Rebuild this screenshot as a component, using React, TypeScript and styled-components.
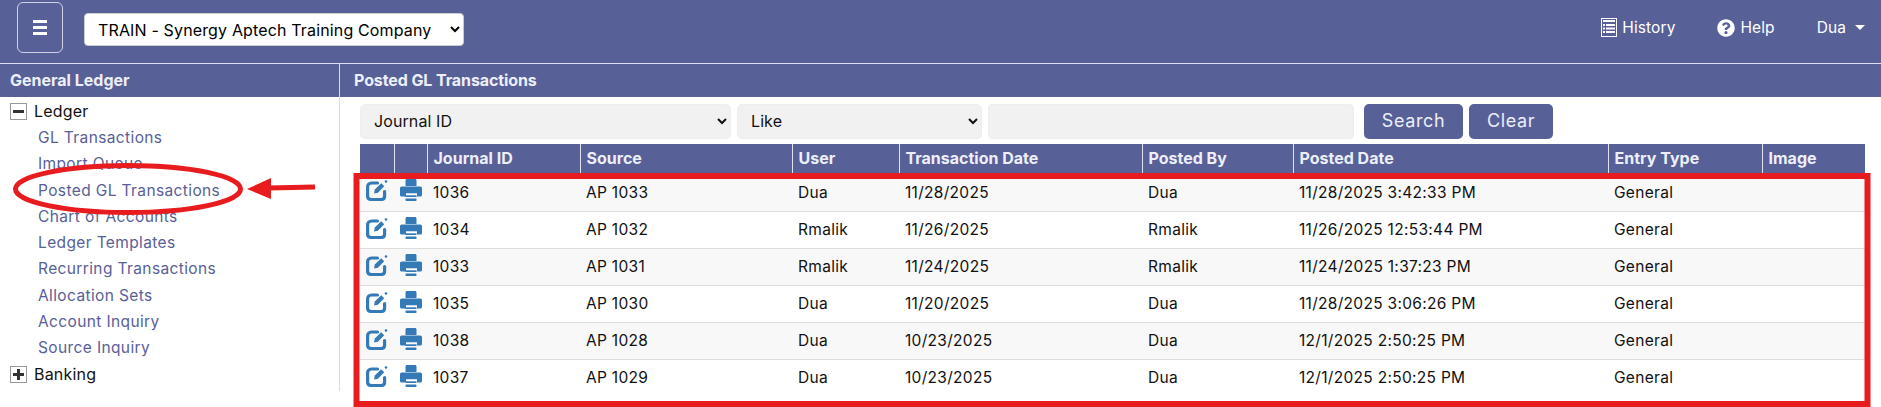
import styled, { createGlobalStyle } from "styled-components";
import { FaQuestionCircle } from "react-icons/fa";

const NAV = "#586098";

const ledgerLinks = [
  "GL Transactions",
  "Import Queue",
  "Posted GL Transactions",
  "Chart of Accounts",
  "Ledger Templates",
  "Recurring Transactions",
  "Allocation Sets",
  "Account Inquiry",
  "Source Inquiry",
];

const columns = [
  { label: "", width: 34 },
  { label: "", width: 33 },
  { label: "Journal ID", width: 153 },
  { label: "Source", width: 212 },
  { label: "User", width: 107 },
  { label: "Transaction Date", width: 243 },
  { label: "Posted By", width: 151 },
  { label: "Posted Date", width: 315 },
  { label: "Entry Type", width: 154 },
  { label: "Image", width: 103 },
];

const rows = [
  ["1036", "AP 1033", "Dua", "11/28/2025", "Dua", "11/28/2025 3:42:33 PM", "General"],
  ["1034", "AP 1032", "Rmalik", "11/26/2025", "Rmalik", "11/26/2025 12:53:44 PM", "General"],
  ["1033", "AP 1031", "Rmalik", "11/24/2025", "Rmalik", "11/24/2025 1:37:23 PM", "General"],
  ["1035", "AP 1030", "Dua", "11/20/2025", "Dua", "11/28/2025 3:06:26 PM", "General"],
  ["1038", "AP 1028", "Dua", "10/23/2025", "Dua", "12/1/2025 2:50:25 PM", "General"],
  ["1037", "AP 1029", "Dua", "10/23/2025", "Dua", "12/1/2025 2:50:25 PM", "General"],
];

const EditIcon = () => (
  <svg width="22" height="22" viewBox="0 0 22 22" fill="none">
    <path
      d="M11.500 4H5.500C3.200 4 1.600 5.600 1.600 7.800v9.400c0 2.200 1.600 3.300 3.900 3.300h9.600c2.200 0 3.500-1.300 3.500-3.500V12.500"
      stroke="#337ab7"
      strokeWidth="3.200"
      strokeLinecap="round"
    />
    <path d="M8 14.500l.8-4 6.400-6.200 3 3-6.300 6.400z" fill="#337ab7" />
    <rect x="18.800" y="1.200" width="2.400" height="2.400" rx="0.6" transform="rotate(45 20 2.400)" fill="#337ab7" />
  </svg>
);

const PrintIcon = () => (
  <svg width="22" height="22" viewBox="0 0 22 22">
    <path d="M5.500 1.500C5.500.7 6.200 0 7 0h8c.8 0 1.500.7 1.500 1.500V7h-11z" fill="#337ab7" />
    <path
      d="M1.800 7.500h18.400c1 0 1.800.8 1.800 1.800v6.700c0 .8-.7 1.500-1.500 1.500h-3.500v-3.300h-11v3.300H1.500C.7 17.500 0 16.800 0 16V9.300c0-1 .8-1.800 1.800-1.800z"
      fill="#337ab7"
    />
    <rect x="5.500" y="16.300" width="11" height="1.700" fill="#337ab7" />
    <rect x="5.500" y="19.600" width="11" height="2.400" rx="0.8" fill="#337ab7" />
  </svg>
);

const HistoryIcon = () => (
  <svg width="16" height="19" viewBox="0 0 16 19">
    <rect x="0.5" y="0.5" width="15" height="18" fill="none" stroke="#fff" />
    <rect x="2" y="2" width="12" height="2" fill="#fff" />
    <path d="M2 6h2v2H2zM5 6h9v2H5zM2 9.500h2v2H2zM5 9.500h9v2H5zM2 13h2v2H2zM5 13h9v2H5z" fill="#fff" />
  </svg>
);

const App = () => (
  <Page>
    <GlobalStyle />
    <TopBar>
      <MenuButton>
        <MenuLine />
        <MenuLine />
        <MenuLine />
      </MenuButton>
      <CompanySelect defaultValue="train">
        <option value="train">TRAIN - Synergy Aptech Training Company</option>
      </CompanySelect>
      <TopLinks>
        <TopLink>
          <HistoryIcon />
          History
        </TopLink>
        <TopLink>
          <FaQuestionCircle size={18} />
          Help
        </TopLink>
        <TopLink>
          Dua
          <Caret />
        </TopLink>
      </TopLinks>
    </TopBar>
    <Main>
      <Sidebar>
        <SectionTitle>General Ledger</SectionTitle>
        <Tree>
          <TreeRoot>
            <TreeToggle>
              <Minus />
            </TreeToggle>
            Ledger
          </TreeRoot>
          {ledgerLinks.map((link) => (
            <TreeLink key={link}>{link}</TreeLink>
          ))}
          <TreeRoot>
            <TreeToggle>
              <Minus />
              <PlusBar />
            </TreeToggle>
            Banking
          </TreeRoot>
        </Tree>
      </Sidebar>
      <Content>
        <ContentTitle>Posted GL Transactions</ContentTitle>
        <Body>
          <SearchRow>
            <FieldSelect $width={371} defaultValue="id">
              <option value="id">Journal ID</option>
            </FieldSelect>
            <FieldSelect $width={245} defaultValue="like">
              <option value="like">Like</option>
            </FieldSelect>
            <SearchInput />
            <ActionButton $width={99}>Search</ActionButton>
            <ActionButton $width={84}>Clear</ActionButton>
          </SearchRow>
          <Grid>
            <colgroup>
              {columns.map((col, i) => (
                <GridCol key={i} $width={col.width} />
              ))}
            </colgroup>
            <thead>
              <tr>
                {columns.map((col, i) => (
                  <HeadCell key={i}>{col.label}</HeadCell>
                ))}
              </tr>
            </thead>
            <tbody>
              {rows.map((row) => (
                <Row key={row[0]}>
                  <IconCell>
                    <EditIcon />
                  </IconCell>
                  <IconCell>
                    <PrintIcon />
                  </IconCell>
                  {row.map((value, i) => (
                    <Cell key={i}>{value}</Cell>
                  ))}
                  <Cell />
                </Row>
              ))}
            </tbody>
          </Grid>
        </Body>
      </Content>
    </Main>
    <Annotations width="1881" height="407" viewBox="0 0 1881 407">
      <ellipse cx="128" cy="189" rx="112.500" ry="23.500" fill="none" stroke="#e81c1f" strokeWidth="5" />
      <path d="M268 188l47-1" stroke="#e81c1f" strokeWidth="5" fill="none" />
      <path d="M247 189l24-11v21z" fill="#e81c1f" />
      <rect x="356.500" y="176" width="1511" height="228" fill="none" stroke="#e81c1f" strokeWidth="6" />
    </Annotations>
  </Page>
);

export default App;

const GlobalStyle = createGlobalStyle`
  html, body {
    margin: 0;
    padding: 0;
    background: #fff;
  }
  body {
    font-family: Inter, "Liberation Sans", sans-serif;
    overflow: hidden;
  }
  * {
    box-sizing: border-box;
  }
`;

const Page = styled.div`
  position: relative;
  width: 1881px;
  height: 407px;
  overflow: hidden;
`;

const TopBar = styled.header`
  height: 64px;
  background: ${NAV};
  border-bottom: 1px solid #dcdff0;
  padding: 2px 16px 0 17px;
  display: flex;
  align-items: flex-start;
`;

const MenuButton = styled.div`
  width: 46px;
  height: 51px;
  border: 1px solid #cfd2e6;
  border-radius: 6px;
  display: flex;
  flex-direction: column;
  align-items: center;
  justify-content: center;
  gap: 3px;
`;

const MenuLine = styled.span`
  width: 14px;
  height: 3px;
  background: #fff;
`;

const CompanySelect = styled.select`
  width: 380px;
  height: 33px;
  margin: 11px 0 0 21px;
  padding: 0 8px 0 9px;
  background-color: #fff;
  border: 1px solid #ccc;
  border-radius: 4px;
  font: 16px Inter, "Liberation Sans", sans-serif;
  letter-spacing: 0.15px;
  color: #000;
`;

const TopLinks = styled.nav`
  margin-left: auto;
  padding-top: 15px;
  display: flex;
  gap: 42px;
`;

const TopLink = styled.span`
  display: flex;
  align-items: center;
  gap: 5px;
  height: 21px;
  font-size: 15.500px;
  letter-spacing: 0.1px;
  color: #fff;
`;

const Caret = styled.span`
  width: 0;
  height: 0;
  margin-left: 4px;
  border-left: 5px solid transparent;
  border-right: 5px solid transparent;
  border-top: 5px solid #fff;
`;

const Main = styled.div`
  display: flex;
  height: 327px;
`;

const Sidebar = styled.aside`
  width: 340px;
  border-right: 1px solid #ddd;
  flex: none;
`;

const SectionTitle = styled.div`
  height: 33px;
  padding: 0 0 2px 10px;
  background: ${NAV};
  display: flex;
  align-items: center;
  font-size: 16px;
  font-weight: 700;
  color: #eceef8;
`;

const Tree = styled.div`
  padding-top: 1px;
  display: flex;
  flex-direction: column;
`;

const TreeRoot = styled.div`
  height: 26.300px;
  padding-left: 10px;
  display: flex;
  align-items: center;
  gap: 7px;
  font-size: 16px;
  letter-spacing: 0.2px;
  color: #111;
`;

const TreeToggle = styled.span`
  position: relative;
  width: 17px;
  height: 17px;
  border: 1px solid #999;
  display: flex;
  align-items: center;
  justify-content: center;
`;

const Minus = styled.span`
  width: 11px;
  height: 3px;
  background: #333;
`;

const PlusBar = styled.span`
  position: absolute;
  left: 6px;
  top: 2px;
  width: 3px;
  height: 11px;
  background: #333;
`;

const TreeLink = styled.a`
  height: 26.300px;
  padding-left: 38px;
  display: flex;
  align-items: center;
  font-size: 15.500px;
  letter-spacing: 0.38px;
  color: ${NAV};
`;

const Content = styled.main`
  flex: 1;
  min-width: 0;
`;

const ContentTitle = styled.div`
  height: 33px;
  padding: 0 0 2px 14px;
  background: ${NAV};
  display: flex;
  align-items: center;
  font-size: 16px;
  font-weight: 700;
  letter-spacing: -0.1px;
  color: #eceef8;
`;

const Body = styled.div`
  padding: 7px 0 0 20px;
`;

const SearchRow = styled.div`
  height: 35px;
  display: flex;
  gap: 6px;
`;

const FieldSelect = styled.select<{ $width: number }>`
  width: ${(p) => p.$width}px;
  height: 35px;
  padding: 0 0 2px 9px;
  background-color: #f1f1f1;
  border: 1px solid #eee;
  border-radius: 5px;
  font: 16px Inter, "Liberation Sans", sans-serif;
  letter-spacing: 0.1px;
  color: #111;
`;

const SearchInput = styled.input`
  width: 366px;
  height: 35px;
  margin-right: 4px;
  background: #f1f1f1;
  border: 1px solid #eee;
  border-radius: 4px;
`;

const ActionButton = styled.button<{ $width: number }>`
  width: ${(p) => p.$width}px;
  height: 35px;
  padding: 0 0 3px;
  background: ${NAV};
  border: none;
  border-radius: 5px;
  font: 18px Inter, "Liberation Sans", sans-serif;
  letter-spacing: 0.6px;
  color: #eceef8;
`;

const Grid = styled.table`
  margin-top: 5px;
  width: 1505px;
  table-layout: fixed;
  border-collapse: collapse;
`;

const GridCol = styled.col<{ $width: number }>`
  width: ${(p) => p.$width}px;
`;

const HeadCell = styled.th`
  height: 30px;
  padding: 0 0 2px 6px;
  background: ${NAV};
  border-left: 1px solid #dfe1ee;
  text-align: left;
  font-size: 16px;
  font-weight: 700;
  color: #eceef8;

  &:first-child {
    border-left: none;
  }
`;

const Row = styled.tr`
  height: 37px;
  border-bottom: 1px solid #ddd;

  &:nth-child(odd) {
    background: #f8f8f8;
  }

  &:last-child {
    border-bottom: none;
  }
`;

const Cell = styled.td`
  padding: 0 0 0 6px;
  font-size: 15.500px;
  letter-spacing: 0.3px;
  color: #111;
`;

const IconCell = styled.td`
  padding: 0 0 4px 6px;
  line-height: 0;
  vertical-align: middle;

  & svg {
    display: block;
  }
`;

const Annotations = styled.svg`
  position: absolute;
  left: 0;
  top: 0;
  pointer-events: none;
`;
